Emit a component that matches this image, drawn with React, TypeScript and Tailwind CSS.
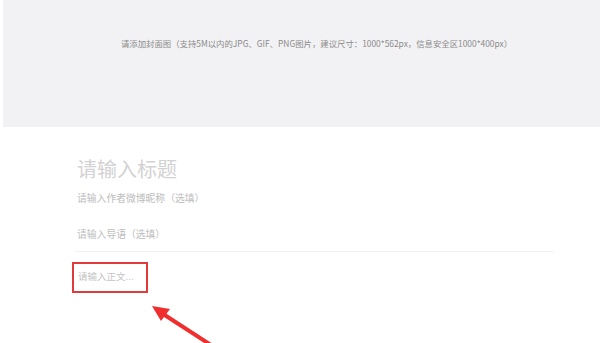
export default function App() {
  return (
    <div className="relative h-[343px] w-[600px] overflow-hidden bg-white" style={{ fontFamily: '"Noto Sans CJK SC", "Noto Sans", sans-serif' }}>
      {/* cover banner */}
      <div className="ml-[3px] h-[127px] bg-[#f2f2f4] pl-[30px] pt-[36px] text-center text-[8.4px] leading-[14px] text-[#8a8a8a]">
        请添加封面图（支持5M以内的JPG、GIF、PNG图片，建议尺寸：1000*562px，信息安全区1000*400px）
      </div>

      {/* form */}
      <div className="ml-[75px] w-[478px]">
        <div className="pl-[2px] pt-[28px] text-[20px] leading-[28px] text-[#d2d2d2]">请输入标题</div>
        <div className="pl-[2px] pt-[8px] text-[9.8px] leading-[14px] text-[#bdbdbd]">请输入作者微博昵称（选填）</div>
        <div className="pl-[2px] pt-[22px] pb-[10px] text-[9.8px] leading-[14px] text-[#bdbdbd] border-b border-[#f0f0f0]">
          请输入导语（选填）
        </div>
        <div className="pt-[10px]">
          <div className="ml-[-3px] h-[31px] w-[76px] border-2 border-[#e2393b] pl-[4px] pt-[5px] text-[9.5px] leading-[14px] text-[#c4c4c4]">
            请输入正文...
          </div>
        </div>
      </div>

      {/* annotation arrow */}
      <svg className="absolute left-[148px] top-[302px]" width="70" height="45" viewBox="0 0 70 45">
        <line x1="12" y1="10" x2="66" y2="45" stroke="#f02e2e" strokeWidth="4" />
        <polygon points="4,4 22,7 13,19" fill="#f02e2e" />
      </svg>
    </div>
  )
}
